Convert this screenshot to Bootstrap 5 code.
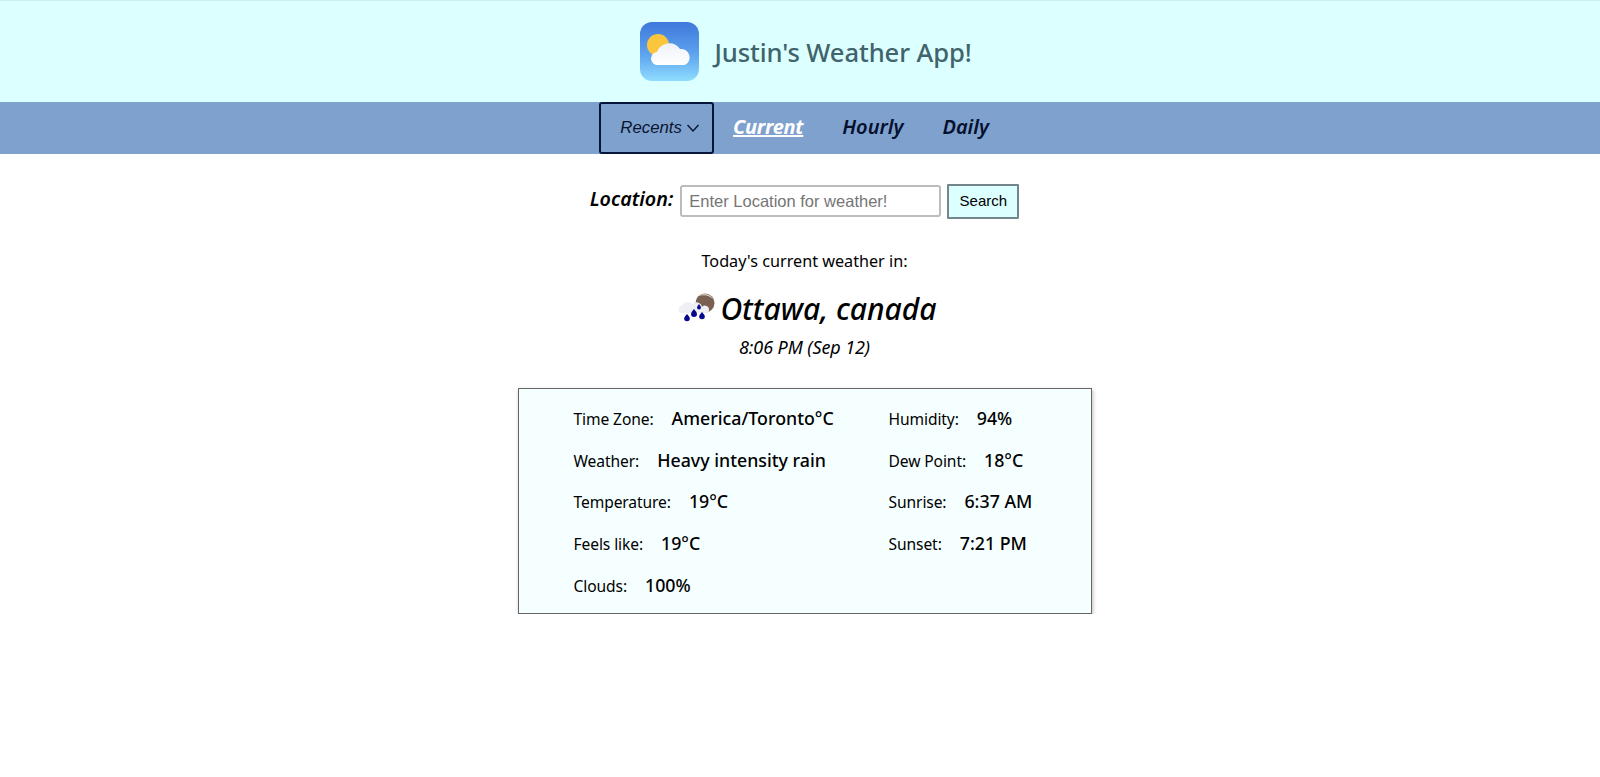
<!DOCTYPE html>
<html lang="en">
<head>
    <meta charset="UTF-8">
    <meta name="viewport" content="width=device-width, initial-scale=1.0">
    <title>Justin's Weather App!</title>
    <link href="https://cdn.jsdelivr.net/npm/bootstrap@5.3.0/dist/css/bootstrap.min.css" rel="stylesheet">
    <style>
        body {
            font-family: "Noto Sans", "Open Sans", sans-serif;
            color: #000;
            background: #fff;
        }
        .app-header {
            height: 102px;
            padding-left: 12px;
            background-color: #dcffff;
            border-top: 1px solid #cdeeee;
        }
        .app-logo {
            width: 59px;
            height: 59px;
        }
        .app-title {
            font-size: 25.6px;
            font-weight: 500;
            color: #41636b;
            margin-left: 15px;
            padding-top: 3px;
            letter-spacing: -0.1px;
        }
        .app-nav {
            height: 52px;
            background-color: #7fa1ce;
            padding-right: 12px;
        }
        .recents-btn {
            width: 115px;
            height: 52px;
            border: 2px solid #05153c;
            border-radius: 3px;
            background: transparent;
            font-family: "Liberation Sans", Arial, sans-serif;
            font-style: italic;
            font-size: 16.8px;
            color: #0a1530;
            padding: 0 0 0 7px;
        }
        .tab-link {
            font-size: 20px;
            font-weight: 600;
            font-style: italic;
            color: #04102e;
            text-decoration: none;
            padding-bottom: 3px;
        }
        .tab-link.is-active {
            color: #fff;
            font-weight: 700;
            letter-spacing: -0.3px;
            text-decoration: underline;
        }
        .tabs-row {
            gap: 39px;
            margin-left: 19px;
        }
        .page-main {
            padding-left: 9px;
        }
        .search-row {
            margin-top: 30px;
            height: 34px;
        }
        .search-label {
            font-size: 19.7px;
            font-weight: 600;
            font-style: italic;
            margin: 0 7px 0 0;
            padding-bottom: 4px;
        }
        .search-input {
            width: 261px;
            height: 32px;
            border: 2px solid #bcbcbc;
            border-radius: 3px;
            padding: 0 7px;
            font-family: "Liberation Sans", Arial, sans-serif;
            font-size: 16.5px;
            outline: none;
        }
        .search-input::placeholder {
            color: #757575;
            opacity: 1;
        }
        .search-btn {
            width: 72px;
            height: 35px;
            margin-left: 6px;
            border: 2px solid #74868b;
            border-radius: 1px;
            background: #dcffff;
            font-family: "Liberation Sans", Arial, sans-serif;
            font-size: 15px;
            color: #000;
            padding: 0;
        }
        .today-line {
            margin: 31px 0 0;
            font-size: 16.2px;
            line-height: 24px;
        }
        .city-line {
            margin: 14px 0 0;
            padding-left: 6px;
            height: 44px;
            font-size: 30px;
            line-height: 44px;
            font-weight: 500;
            font-style: italic;
        }
        .weather-glyph {
            width: 38px;
            height: 30px;
            margin-right: 4px;
            vertical-align: -2px;
        }
        .time-line {
            margin: 3px 0 0;
            font-size: 18px;
            line-height: 26px;
            font-style: italic;
            letter-spacing: -0.1px;
        }
        .weather-box {
            width: 574px;
            height: 226px;
            margin-top: 28px;
            padding: 9px 0 0 55px;
            background-color: #f5ffff;
            border: 1px solid #666;
            box-shadow: 1px 2px 4px rgba(0, 0, 0, .25);
        }
        .weather-col-left {
            width: 315px;
        }
        .stat-row {
            height: 41.7px;
            line-height: 41.7px;
            white-space: nowrap;
        }
        .stat-name {
            font-size: 15.6px;
            margin-right: 18px;
            letter-spacing: -0.1px;
        }
        .stat-value {
            font-size: 17.8px;
            font-weight: 500;
        }
    </style>
</head>
<body>
    <!-- Header -->
    <header class="app-header d-flex align-items-center justify-content-center">
        <svg class="app-logo" viewBox="0 0 59 59" role="img" aria-label="Weather logo">
            <defs>
                <linearGradient id="skyGrad" x1="0" y1="0" x2="0" y2="1">
                    <stop offset="0" stop-color="#3f78dc"/>
                    <stop offset="0.55" stop-color="#5da3ee"/>
                    <stop offset="1" stop-color="#8fdcff"/>
                </linearGradient>
                <linearGradient id="cloudGrad" x1="0" y1="0" x2="0" y2="1">
                    <stop offset="0" stop-color="#eef2fa"/>
                    <stop offset="1" stop-color="#ffffff"/>
                </linearGradient>
            </defs>
            <rect width="59" height="59" rx="12" fill="url(#skyGrad)"/>
            <circle cx="18" cy="23" r="11" fill="#fbc63e"/>
            <path d="M18 43 a6.5 6.5 0 0 1 -1 -13 a13 13 0 0 1 23 -3 a8.500 8.500 0 0 1 5 16 z" fill="url(#cloudGrad)"/>
        </svg>
        <span class="app-title">Justin's Weather App!</span>
    </header>

    <!-- Tabs -->
    <nav class="app-nav d-flex justify-content-center">
        <button class="recents-btn d-flex align-items-center justify-content-center" type="button">
            Recents
            <svg class="ms-1" width="14" height="8" viewBox="0 0 14 8" fill="none" stroke="#0a1530" stroke-width="1.4"><path d="M1.5 1 L7 7 L12.5 1"/></svg>
        </button>
        <div class="tabs-row d-flex align-items-center">
            <a class="tab-link is-active" href="#">Current</a>
            <a class="tab-link" href="#">Hourly</a>
            <a class="tab-link" href="#">Daily</a>
        </div>
    </nav>

    <main class="page-main d-flex flex-column align-items-center">
        <form class="search-row d-flex align-items-center justify-content-center">
            <label class="search-label" for="locationInput">Location:</label>
            <input class="search-input" id="locationInput" type="text" placeholder="Enter Location for weather!">
            <button class="search-btn" type="button">Search</button>
        </form>

        <p class="today-line">Today's current weather in:</p>
        <h1 class="city-line">
            <svg class="weather-glyph" viewBox="0 0 38 30" aria-hidden="true">
                <circle cx="27" cy="11" r="9.500" fill="#7a6050"/>
                <path d="M21 4 a9.500 9.500 0 0 1 14 3 a14 14 0 0 0 -14 -3z" fill="#d6ccc2"/>
                <path d="M4 21 a3.500 3.500 0 0 1 0 -7 a6 6 0 0 1 10 -2 a6 6 0 0 1 10 3 a4 4 0 0 1 7 3 a3 3 0 0 1 -3 3 z" fill="#eef0f3"/>
                <path d="M9 22 q2.800 3 2.800 4.500 a2.800 2.800 0 0 1 -5.600 0 q0 -1.500 2.800 -4.500 z" fill="#07078f"/>
                <path d="M16 17 q3 3.200 3 5 a3 3 0 0 1 -6 0 q0 -1.800 3 -5 z" fill="#07078f"/>
                <path d="M24 20 q2.800 3 2.800 4.500 a2.800 2.800 0 0 1 -5.600 0 q0 -1.500 2.800 -4.500 z" fill="#07078f"/>
                <path d="M21 12 q2 2.400 2 3.600 a2 2 0 0 1 -4 0 q0 -1.200 2 -3.600 z" fill="#07078f"/>
            </svg>Ottawa, canada
        </h1>
        <p class="time-line">8:06 PM (Sep 12)</p>

        <section class="weather-box d-flex">
            <div class="weather-col-left">
                <div class="stat-row"><span class="stat-name">Time Zone:</span><span class="stat-value">America/Toronto°C</span></div>
                <div class="stat-row"><span class="stat-name">Weather:</span><span class="stat-value">Heavy intensity rain</span></div>
                <div class="stat-row"><span class="stat-name">Temperature:</span><span class="stat-value">19°C</span></div>
                <div class="stat-row"><span class="stat-name">Feels like:</span><span class="stat-value">19°C</span></div>
                <div class="stat-row"><span class="stat-name">Clouds:</span><span class="stat-value">100%</span></div>
            </div>
            <div>
                <div class="stat-row"><span class="stat-name">Humidity:</span><span class="stat-value">94%</span></div>
                <div class="stat-row"><span class="stat-name">Dew Point:</span><span class="stat-value">18°C</span></div>
                <div class="stat-row"><span class="stat-name">Sunrise:</span><span class="stat-value">6:37 AM</span></div>
                <div class="stat-row"><span class="stat-name">Sunset:</span><span class="stat-value">7:21 PM</span></div>
            </div>
        </section>
    </main>

    <script src="https://cdn.jsdelivr.net/npm/bootstrap@5.3.0/dist/js/bootstrap.bundle.min.js"></script>
</body>
</html>
